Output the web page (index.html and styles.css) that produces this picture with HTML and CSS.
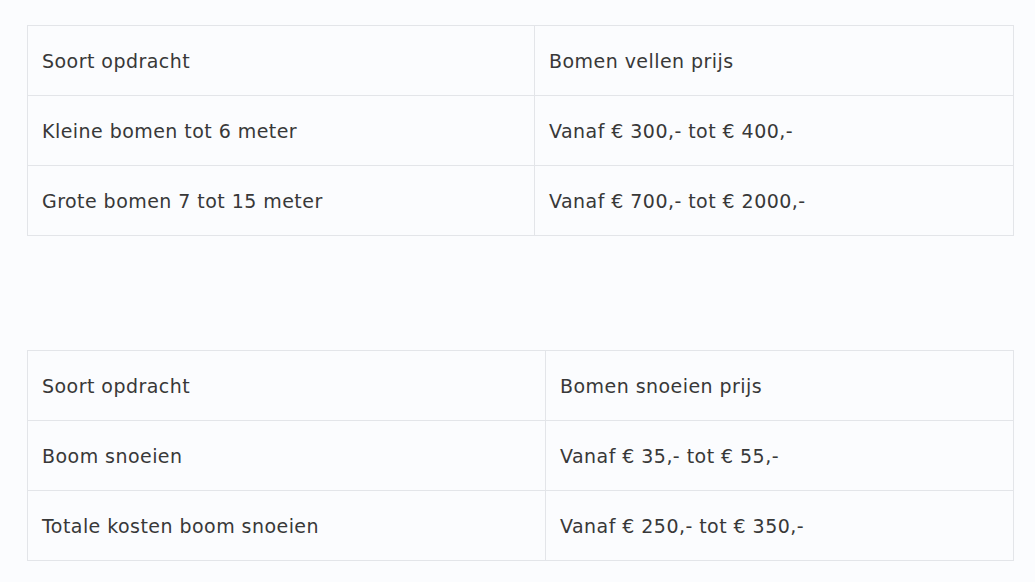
FILE: index.html
```html
<!DOCTYPE html>
<html lang="nl">
<head>
  <meta charset="UTF-8">
  <meta name="viewport" content="width=device-width, initial-scale=1.0">
  <title>Bomen prijzen</title>
  <link rel="stylesheet" href="styles.css">
</head>
<body>
  <div class="content">
    <!-- Bomen vellen -->
    <table class="price-table vellen">
      <tr>
        <td class="col-type">Soort opdracht</td>
        <td>Bomen vellen prijs</td>
      </tr>
      <tr>
        <td class="col-type">Kleine bomen tot 6 meter</td>
        <td>Vanaf € 300,- tot € 400,-</td>
      </tr>
      <tr>
        <td class="col-type">Grote bomen 7 tot 15 meter</td>
        <td>Vanaf € 700,- tot € 2000,-</td>
      </tr>
    </table>

    <!-- Bomen snoeien -->
    <table class="price-table snoeien">
      <tr>
        <td class="col-type">Soort opdracht</td>
        <td>Bomen snoeien prijs</td>
      </tr>
      <tr>
        <td class="col-type">Boom snoeien</td>
        <td>Vanaf € 35,- tot € 55,-</td>
      </tr>
      <tr>
        <td class="col-type">Totale kosten boom snoeien</td>
        <td>Vanaf € 250,- tot € 350,-</td>
      </tr>
    </table>
  </div>
</body>
</html>
```

FILE: styles.css
```css
body {
  margin: 0;
  background-color: #fbfcfe;
  font-family: "DejaVu Sans", sans-serif;
  color: #383838;
}
.content {
  padding: 25px 21px 0 27px;
}
.price-table {
  width: 100%;
  border-collapse: collapse;
  font-size: 19px;
  letter-spacing: 0.45px;
}
.price-table td {
  height: 69px;
  padding: 0 14px;
  border: 1px solid #e3e5e9;
  vertical-align: middle;
  text-align: left;
}
.vellen .col-type {
  width: 478px;
}
.snoeien {
  margin-top: 114px;
}
.snoeien .col-type {
  width: 489px;
}
```
